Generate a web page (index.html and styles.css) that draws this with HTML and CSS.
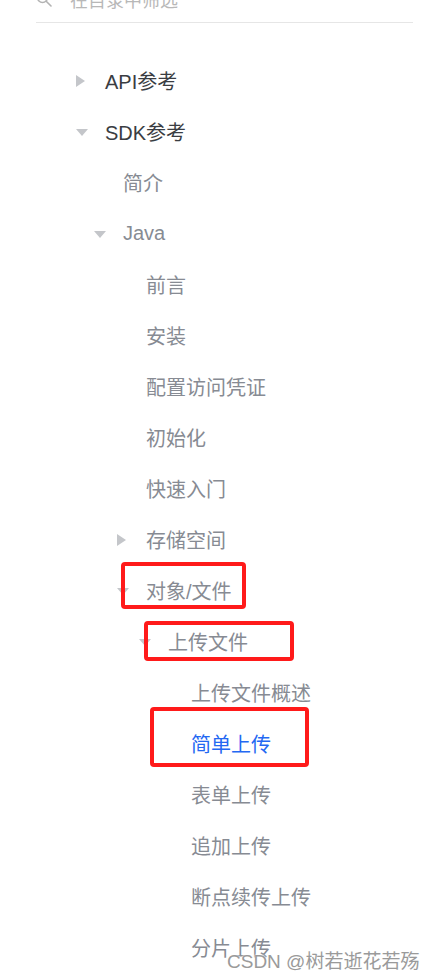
FILE: index.html
```html
<!DOCTYPE html>
<html lang="zh-CN">
<head>
    <meta charset="UTF-8">
    <meta name="viewport" content="width=device-width, initial-scale=1.0">
    <title>SDK参考 - 简单上传</title>
    <link rel="stylesheet" href="styles.css">
</head>
<body>
    <div class="sidebar">
        <div class="search">
            <svg class="search-icon" width="16" height="16" viewBox="0 0 16 16">
                <circle cx="6.5" cy="6.5" r="5" fill="none" stroke="#b3b3b3" stroke-width="1.6"/>
                <line x1="10.2" y1="10.2" x2="15" y2="15" stroke="#b3b3b3" stroke-width="1.6" stroke-linecap="round"/>
            </svg>
            <span class="search-text">在目录中筛选</span>
        </div>

        <ul class="tree">
            <li class="node lvl-1"><span class="arrow closed"></span><span class="top">API参考</span></li>
            <li class="node lvl-1"><span class="arrow open"></span><span class="top">SDK参考</span></li>
            <li class="node lvl-2"><span class="arrow"></span>简介</li>
            <li class="node lvl-2"><span class="arrow open"></span>Java</li>
            <li class="node lvl-3"><span class="arrow"></span>前言</li>
            <li class="node lvl-3"><span class="arrow"></span>安装</li>
            <li class="node lvl-3"><span class="arrow"></span>配置访问凭证</li>
            <li class="node lvl-3"><span class="arrow"></span>初始化</li>
            <li class="node lvl-3"><span class="arrow"></span>快速入门</li>
            <li class="node lvl-3"><span class="arrow closed"></span>存储空间</li>
            <li class="node lvl-3"><span class="arrow open"></span>对象/文件</li>
            <li class="node lvl-4"><span class="arrow open"></span>上传文件</li>
            <li class="node lvl-5"><span class="arrow"></span>上传文件概述</li>
            <li class="node lvl-5 active"><span class="arrow"></span>简单上传</li>
            <li class="node lvl-5"><span class="arrow"></span>表单上传</li>
            <li class="node lvl-5"><span class="arrow"></span>追加上传</li>
            <li class="node lvl-5"><span class="arrow"></span>断点续传上传</li>
            <li class="node lvl-5"><span class="arrow"></span>分片上传</li>
        </ul>
    </div>

    <!-- red annotation boxes drawn over the menu -->
    <div class="mark mark-1"></div>
    <div class="mark mark-2"></div>
    <div class="mark mark-3"></div>

    <div class="watermark">CSDN @树若逝花若殇</div>
</body>
</html>
```

FILE: styles.css
```css
body {
    margin: 0;
    background-color: #fff;
    font-family: "Liberation Sans", "Noto Sans CJK SC", sans-serif;
    height: 978px;
    overflow: hidden;
    position: relative;
}

.sidebar {
    margin-left: 36px;
    width: 377px;
}

.search {
    height: 46px;
    margin-top: -24px;
    display: flex;
    align-items: center;
    gap: 18px;
    border-bottom: 1px solid #e6e6e6;
}

.search-icon {
    flex-shrink: 0;
}

.search-text {
    color: #b8b8b8;
    font-size: 18px;
}

.tree {
    list-style: none;
    margin: 32px 0 0 0;
    padding: 0;
}

.node {
    display: flex;
    align-items: center;
    height: 51px;
    font-size: 20px;
    color: #878b93;
    white-space: nowrap;
}

.node .top {
    color: #3a3d42;
}

.node.active {
    color: #2468f2;
}

.lvl-1 { padding-left: 40px; }
.lvl-2 { padding-left: 58px; }
.lvl-3 { padding-left: 81px; }
.lvl-4 { padding-left: 103px; }
.lvl-5 { padding-left: 126px; }

.arrow {
    width: 29px;
    height: 12px;
    flex-shrink: 0;
    position: relative;
}

.arrow.closed::before {
    content: "";
    position: absolute;
    left: 0;
    top: 0;
    border-top: 6px solid transparent;
    border-bottom: 6px solid transparent;
    border-left: 9px solid #c4c6ca;
}

.arrow.open::before {
    content: "";
    position: absolute;
    left: 0;
    top: 3px;
    border-left: 6px solid transparent;
    border-right: 6px solid transparent;
    border-top: 7px solid #c4c6ca;
}

.mark {
    position: absolute;
    border: 4px solid #ff1a1a;
    border-radius: 4px;
    box-sizing: border-box;
}

.mark-1 { left: 121px; top: 562px; width: 125px; height: 47px; }
.mark-2 { left: 144px; top: 621px; width: 150px; height: 40px; }
.mark-3 { left: 150px; top: 707px; width: 159px; height: 60px; }

.watermark {
    position: absolute;
    left: 227px;
    top: 946px;
    font-size: 19px;
    color: #9a9a9a;
    white-space: nowrap;
    text-shadow: 0 0 2px #fff, 0 0 2px #fff;
}
```
